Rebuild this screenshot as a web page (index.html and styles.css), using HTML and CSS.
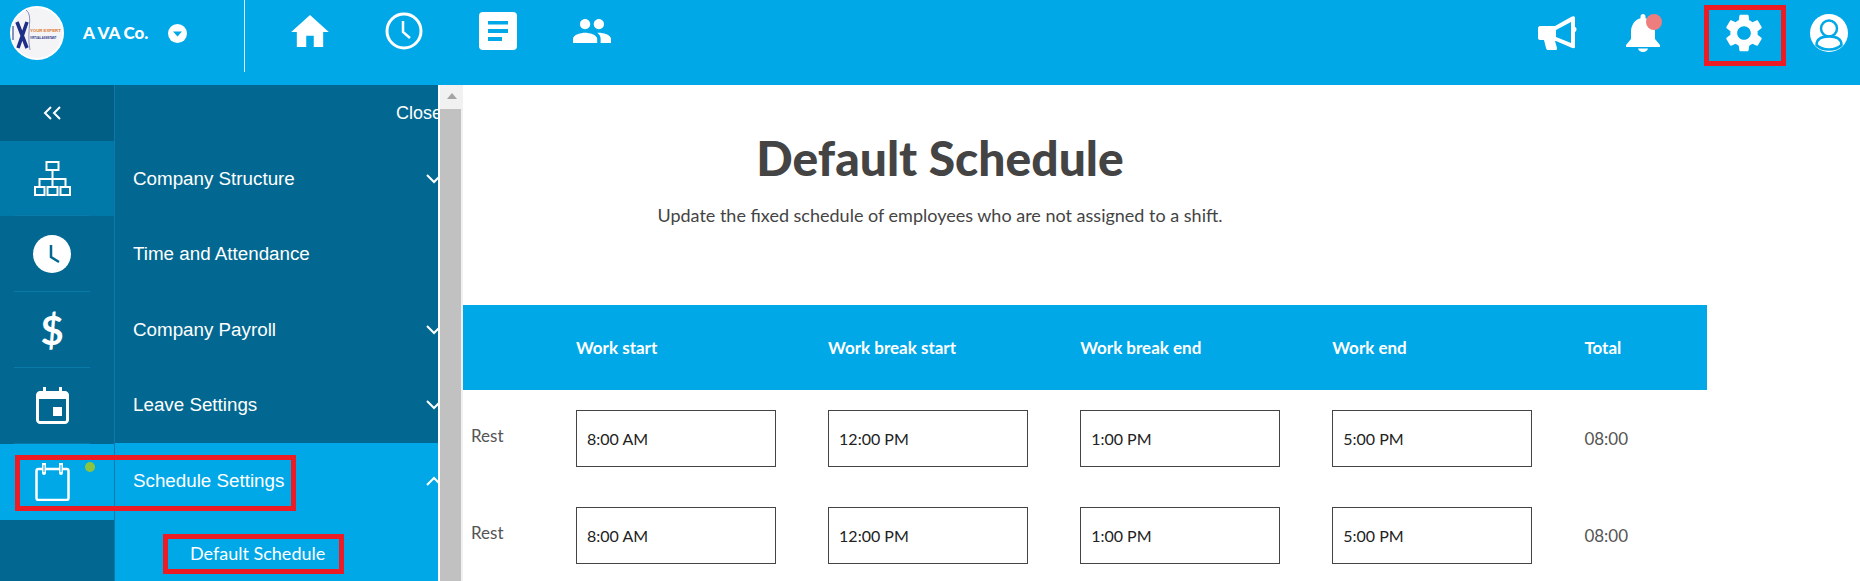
FILE: index.html
```html
<!DOCTYPE html>
<html lang="en">
<head>
<meta charset="utf-8">
<title>Default Schedule</title>
<link rel="stylesheet" href="styles.css">
</head>
<body>
<div class="app">
  <header class="topbar">
    <div class="brand">
      <svg class="logo" viewBox="0 0 54 54">
        <circle cx="27" cy="27" r="26" fill="#f4f3f5" stroke="#fff" stroke-width="2"/>
        <path d="M7 16 L17 42 M17 16 L8 42" stroke="#1d2f86" stroke-width="3.500" fill="none"/>
        <path d="M3 20v14" stroke="#1d2f86" stroke-width="1" fill="none"/>
        <path d="M16 4 C24 10 16 24 20 44" stroke="#8a8fc0" stroke-width="1" fill="none"/>
        <text x="20" y="26" class="logo-top">YOUR EXPERT</text>
        <text x="20" y="33" class="logo-sub">VIRTUAL ASSISTANT</text>
      </svg>
      <span class="company">A VA Co.</span>
      <svg class="caret" viewBox="0 0 19 19"><circle cx="9.5" cy="9.5" r="9.5" fill="#fff"/><path d="M5 7.5h9l-4.500 5z" fill="#00a8e8"/></svg>
    </div>
    <nav class="mainnav">
      <svg class="nav-icon" viewBox="2 3 20 17" height="32"><path fill="#fff" d="M10 20v-6h4v6h5v-8h3L12 3 2 12h3v8z"/></svg>
      <svg class="nav-icon" viewBox="0 0 38 38" height="38"><circle cx="19" cy="19" r="17" fill="none" stroke="#fff" stroke-width="3"/><path d="M18 9v11l7 6" fill="none" stroke="#fff" stroke-width="2.500"/></svg>
      <svg class="nav-icon" viewBox="0 0 38 38" height="38"><rect width="38" height="38" rx="4" fill="#fff"/><path d="M9 9h20v3.500H9zM9 17h20v4H9zM9 25h14v4H9z" fill="#00a8e8"/></svg>
      <svg class="nav-icon" viewBox="1 5 22 14" height="26"><path fill="#fff" d="M16 11c1.660 0 2.990-1.340 2.990-3S17.660 5 16 5c-1.660 0-3 1.340-3 3s1.340 3 3 3zm-8 0c1.660 0 2.990-1.340 2.990-3S9.660 5 8 5C6.340 5 5 6.340 5 8s1.340 3 3 3zm0 2c-2.330 0-7 1.170-7 3.500V19h14v-2.500c0-2.330-4.670-3.500-7-3.500zm8 0c-.29 0-.62.02-.97.05 1.160.84 1.970 1.970 1.970 3.450V19h6v-2.500c0-2.330-4.670-3.500-7-3.500z"/></svg>
    </nav>
    <div class="tools">
      <svg class="tool-mega" viewBox="0 0 39 34"><path fill="#fff" fill-rule="evenodd" d="M2 10h15L33 1c2-1 4-1 4 1v9c2 .5 2 4 0 5v15c0 1.500-2 1.500-4 .5L18 25h-1l2 7c.3 1.500-.5 2-1.500 2H10c-1 0-1.500-.5-2-2L6 24H2c-1 0-2-1-2-2V12c0-1 1-2 2-2zM18 14v7l15 6V6z"/></svg>
      <div class="bell-wrap">
        <svg class="bell" viewBox="0 0 34 38"><path fill="#fff" d="M17 0c1.500 0 2.500 1 2.500 2.500v1.700C26 6 29 12 29 18v7l5 6v2H0v-2l5-6v-7C5 12 8 6 14.500 4.200V2.500C14.500 1 15.500 0 17 0zM12 34.500h10c-.5 2-2.500 3.500-5 3.500s-4.500-1.500-5-3.500z"/></svg>
        <span class="bell-dot"></span>
      </div>
      <div class="gear-box">
        <svg class="gear" viewBox="2.400 2 19.200 20"><path fill="#fff" d="M19.140 12.940c.04-.3.06-.61.06-.94 0-.32-.02-.64-.07-.94l2.030-1.580c.18-.14.23-.41.12-.61l-1.920-3.320c-.12-.22-.37-.29-.59-.22l-2.390.96c-.5-.38-1.030-.7-1.620-.94l-.36-2.540c-.04-.24-.24-.41-.48-.41h-3.840c-.24 0-.43.17-.47.41l-.36 2.540c-.59.24-1.130.57-1.620.94l-2.390-.96c-.22-.08-.47 0-.59.22L2.740 8.870c-.12.21-.08.47.12.61l2.030 1.580c-.05.3-.09.63-.09.94s.02.64.07.94l-2.030 1.580c-.18.14-.23.41-.12.61l1.920 3.320c.12.22.37.29.59.22l2.390-.96c.5.38 1.030.7 1.620.94l.36 2.540c.05.24.24.41.48.41h3.840c.24 0 .44-.17.47-.41l.36-2.540c.59-.24 1.130-.56 1.620-.94l2.390.96c.22.08.47 0 .59-.22l1.920-3.320c.12-.22.07-.47-.12-.61l-2.010-1.580zM12 15.600c-1.980 0-3.600-1.620-3.600-3.600s1.620-3.600 3.600-3.600 3.600 1.620 3.600 3.600-1.620 3.600-3.600 3.600z"/></svg>
      </div>
      <svg class="user" viewBox="0 0 38 38">
        <circle cx="19" cy="19" r="19" fill="#fff"/>
        <circle cx="19" cy="14.500" r="8" fill="#fff" stroke="#00a8e8" stroke-width="2.500"/>
        <path d="M6.500 31c0-6 5-8.500 12.500-8.500S31.500 25 31.500 31c-3 3-7.500 4.500-12.500 4.500S9.500 34 6.500 31z" fill="#fff" stroke="#00a8e8" stroke-width="2.500"/>
      </svg>
    </div>
  </header>

  <div class="body">
    <aside class="rail">
      <div class="rail-top"><svg class="dbl" viewBox="0 0 20 14"><path d="M8 1 2 7l6 6M17 1l-6 6 6 6" fill="none" stroke="#fff" stroke-width="2"/></svg></div>
      <div class="rail-row rail-row-current rail-row-first">
        <div class="rail-cell">
          <svg class="ic-org" viewBox="0 0 37 35" fill="none" stroke="#fff" stroke-width="2"><rect x="12.500" y="1" width="12" height="8"/><path d="M18.500 9v9M5.500 26v-8h26v8M18.500 18v8"/><rect x="1" y="26" width="9.500" height="8"/><rect x="13.500" y="26" width="10" height="8"/><rect x="26.500" y="26" width="9.500" height="8"/></svg>
        </div>
      </div>
      <div class="rail-row">
        <div class="rail-cell">
          <svg class="ic-clock" viewBox="0 0 38 38"><circle cx="19" cy="19" r="19" fill="#fff"/><path d="M18 10v12l8 5" fill="none" stroke="#026891" stroke-width="2.500"/></svg>
        </div>
      </div>
      <div class="rail-row"><div class="rail-cell"><span class="dollar">$</span></div></div>
      <div class="rail-row">
        <div class="rail-cell">
          <svg class="ic-cal" viewBox="0 0 33 37"><path fill="#fff" fill-rule="evenodd" d="M7 0h3v4h13V0h3v4h3c2 0 4 2 4 4v25c0 2-2 4-4 4H4c-2 0-4-2-4-4V8c0-2 2-4 4-4h3zM3 12v21c0 .6.4 1 1 1h25c.6 0 1-.4 1-1V12z"/><rect x="17" y="20" width="9" height="9" fill="#fff"/></svg>
        </div>
      </div>
      <div class="rail-row rail-row-active">
        <div class="rail-cell rail-cell-plain">
          <svg class="ic-cal2" viewBox="0 0 35 38" fill="none" stroke="#fff" stroke-width="2.500"><rect x="1.500" y="6" width="32" height="31" rx="2"/><path d="M9 1v9M26 1v9" stroke-width="4" stroke-linecap="round"/><path d="M9 2v7M26 2v7" stroke="#00a8e8" stroke-width="1"/></svg>
          <span class="green-dot"></span>
        </div>
      </div>
    </aside>

    <section class="panel">
      <div class="panel-inner">
        <div class="panel-close">Close</div>
        <div class="panel-row panel-row-first"><span>Company Structure</span><svg class="chev" viewBox="0 0 16 10"><path d="M1 1l7 7 7-7" fill="none" stroke="#fff" stroke-width="2"/></svg></div>
        <div class="panel-row"><span>Time and Attendance</span></div>
        <div class="panel-row"><span>Company Payroll</span><svg class="chev" viewBox="0 0 16 10"><path d="M1 1l7 7 7-7" fill="none" stroke="#fff" stroke-width="2"/></svg></div>
        <div class="panel-row panel-row-short"><span>Leave Settings</span><svg class="chev" viewBox="0 0 16 10"><path d="M1 1l7 7 7-7" fill="none" stroke="#fff" stroke-width="2"/></svg></div>
        <div class="panel-open">
          <div class="panel-row"><span>Schedule Settings</span><svg class="chev" viewBox="0 0 16 10"><path d="M1 9l7-7 7 7" fill="none" stroke="#fff" stroke-width="2"/></svg></div>
          <div class="sub-box">Default Schedule</div>
        </div>
      </div>
    </section>

    <div class="scrollbar">
      <div class="scroll-up"><span class="scroll-arrow"></span></div>
      <div class="scroll-thumb"></div>
    </div>

    <main class="content">
      <div class="heading">
        <h1>Default Schedule</h1>
        <p>Update the fixed schedule of employees who are not assigned to a shift.</p>
      </div>
      <div class="table">
        <div class="thead">
          <span></span><span>Work start</span><span>Work break start</span><span>Work break end</span><span>Work end</span><span>Total</span>
        </div>
        <div class="trow">
          <span class="day">Rest</span>
          <div class="time">8:00 AM</div><div class="time">12:00 PM</div><div class="time">1:00 PM</div><div class="time">5:00 PM</div>
          <span class="total">08:00</span>
        </div>
        <div class="trow">
          <span class="day">Rest</span>
          <div class="time">8:00 AM</div><div class="time">12:00 PM</div><div class="time">1:00 PM</div><div class="time">5:00 PM</div>
          <span class="total">08:00</span>
        </div>
      </div>
    </main>
  </div>
  <div class="mark-schedule"></div>
</div>
</body>
</html>
```
FILE: styles.css
```css
* { box-sizing: border-box; }
html, body { margin: 0; height: 100%; overflow: hidden; background: #fff; }
body { font-family: "Lato", "Liberation Sans", sans-serif; color: #444; }
svg { display: block; flex: none; }

.app { position: relative; width: 1860px; height: 581px; overflow: hidden; display: flex; flex-direction: column; }

.topbar { height: 85px; flex: none; background: #00a8e8; display: flex; align-items: flex-start; padding-right: 12px; }
.brand { width: 245px; height: 72px; border-right: 1px solid #d5eefa; display: flex; align-items: flex-start; padding: 6px 0 0 10px; }
.logo { width: 54px; height: 54px; }
.logo-top { font: 700 4.300px "Liberation Sans", sans-serif; fill: #d9762e; }
.logo-sub { font: 700 2.600px "Liberation Sans", sans-serif; fill: #1d2f86; }
.company { margin: 17px 0 0 19px; width: 85px; color: #fff; font-weight: 900; font-size: 17px; line-height: 20px; letter-spacing: -0.100px; }
.caret { width: 19px; height: 19px; margin-top: 18px; }

.mainnav { height: 62px; margin-left: 46px; display: flex; align-items: center; gap: 56px; }
.nav-icon { width: 38px; }

.tools { margin-left: auto; height: 66px; display: flex; align-items: flex-start; }
.tool-mega { width: 39px; height: 34px; margin-top: 16px; }
.bell-wrap { position: relative; width: 34px; height: 38px; margin: 14px 0 0 49px; }
.bell { width: 34px; height: 38px; }
.bell-dot { position: absolute; left: 20px; top: 0; width: 16px; height: 16px; border-radius: 50%; background: #ee7d7d; }
.gear-box { width: 82px; height: 61px; margin: 5px 0 0 44px; border: 5px solid #ed1c24; padding: 4px 0 0 16px; }
.gear { width: 38px; height: 38px; }
.user { width: 38px; height: 38px; margin: 14px 0 0 24px; }

.body { flex: 1; min-height: 0; display: flex; }

.rail { width: 115px; flex: none; background: #026891; border-right: 1px solid #0a7aa8; }
.rail-top { height: 56px; background: #015f85; display: flex; align-items: center; padding-left: 43px; }
.dbl { width: 20px; height: 14px; }
.rail-row { height: 76px; }
.rail-row-first { height: 75px; }
.rail-row-current { background: #0079a9; }
.rail-row-active { background: #00a8e8; }
.rail-cell { position: relative; height: 100%; margin: 0 24px 0 14px; border-bottom: 1px solid #0a7aa8; display: flex; align-items: center; justify-content: center; }
.rail-cell-plain { border-bottom: 0; }
.ic-org { width: 37px; height: 35px; }
.ic-clock { width: 38px; height: 38px; }
.ic-cal { width: 33px; height: 37px; }
.ic-cal2 { width: 35px; height: 38px; }
.dollar { color: #fff; font: 700 40px/1 "Lato", sans-serif; }
.green-dot { position: absolute; left: 71px; top: 18px; width: 10px; height: 10px; border-radius: 50%; background: #8bc540; }

.panel { width: 323px; flex: none; background: #026891; overflow: hidden; }
.panel-inner { width: 345px; height: 100%; display: flex; flex-direction: column; font-family: "Liberation Sans", Arial, sans-serif; color: #fff; font-size: 18.800px; }
.panel-close { height: 56px; padding-right: 18px; font-size: 18px; display: flex; align-items: center; justify-content: flex-end; }
.panel-row { height: 76px; padding: 0 18px; display: flex; align-items: center; justify-content: space-between; }
.panel-row-first { height: 75px; }
.panel-row-short { height: 75px; padding-bottom: 2px; }
.chev { width: 16px; height: 10px; }
.panel-open { flex: 1; background: #00a8e8; }
.sub-box { margin: 15px 0 0 48px; width: 181px; height: 40px; border: 5px solid #ed1c24; padding-left: 22px; font: 18px/29px "Lato", sans-serif; white-space: nowrap; }

.scrollbar { width: 25px; flex: none; display: flex; flex-direction: column; background: #f1f1f1; border-left: 2px solid #fff; }
.scroll-up { height: 24px; display: flex; justify-content: center; padding-top: 8px; }
.scroll-arrow { width: 0; height: 0; border-left: 5px solid transparent; border-right: 5px solid transparent; border-bottom: 6px solid #a3a3a3; }
.scroll-thumb { flex: 1; width: 21px; background: #c1c1c1; }

.content { flex: 1; min-width: 0; }
.heading { width: 954px; height: 220px; padding-top: 45px; text-align: center; }
.heading h1 { margin: 0; font-size: 48px; line-height: 56px; font-weight: 900; color: #444; }
.heading p { margin: 17px 0 0; font-size: 18px; line-height: 24px; color: #444; }

.table { width: 1244px; }
.thead, .trow { display: grid; grid-template-columns: 113px repeat(4, 252.100px) 122.600px; align-items: center; }
.thead { height: 85px; background: #00a8e8; color: #fff; font-weight: 700; font-size: 17px; }
.trow { height: 97px; color: #555; font-size: 17px; }
.day { padding-left: 8px; margin-top: -7px; }
.time { width: 200px; height: 57px; border: 1px solid #444; padding-left: 10px; display: flex; align-items: center; color: #222; font-size: 16px; }
.total { color: #555; }

.mark-schedule { position: absolute; left: 15px; top: 455px; width: 281px; height: 56px; border: 5px solid #ed1c24; }
```
